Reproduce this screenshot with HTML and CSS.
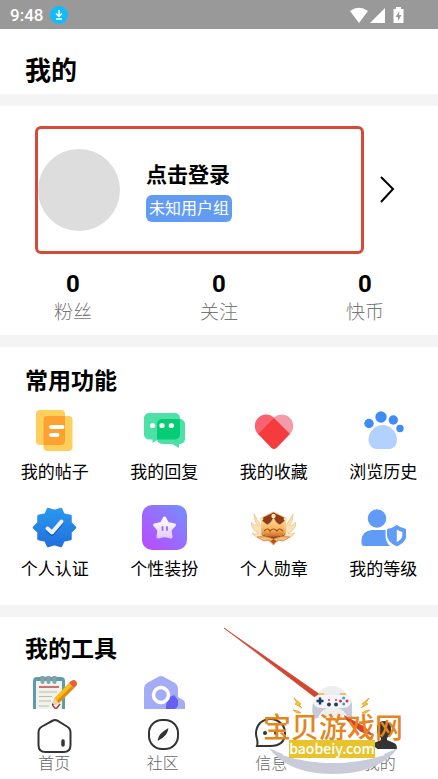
FILE: index.html
```
<!DOCTYPE html>
<html lang="zh-CN">
<head>
<meta charset="UTF-8" />
<meta name="viewport" content="width=device-width, initial-scale=1" />
<title>我的</title>
<link rel="stylesheet" href="styles.css">
</head>
<body>

<!-- STATUS BAR -->
<div class="status-bar">
  <span class="time">9:48</span>
  <svg class="download" width="18" height="18" viewBox="0 0 18 18" aria-hidden="true">
    <circle cx="9" cy="9" r="9" fill="#0fbcff"/>
    <path d="M9 4v6M6 7.500l3 3 3-3M6 13h6" fill="none" stroke="#fff" stroke-width="1.500"/>
  </svg>
  <svg class="signals" width="56" height="18" viewBox="0 0 56 18" fill="#fff" aria-hidden="true">
    <path d="M1 5Q10-1.500 19 5l-9 12z"/>
    <path d="M36 2v15H21z"/>
    <path d="M47 1h5v2h2.500v14h-10V3H47z"/>
    <path d="M50.500 5l-4 6h2.500v4l3.500-6H50z" fill="#999"/>
  </svg>
</div>

<header><h1>我的</h1></header>

<main>
  <!-- PROFILE -->
  <section class="profile">
    <div class="profile-row">
      <a class="login" href="#login">
        <span class="avatar"></span>
        <span class="user">
          <strong>点击登录</strong>
          <span class="group">未知用户组</span>
        </span>
      </a>
      <button class="more" aria-label="更多">
        <svg width="24" height="30" viewBox="0 0 24 30"><path d="M5 2l12 12L5 27" fill="none" stroke="#000" stroke-width="2"/></svg>
      </button>
    </div>
    <div class="stats">
      <a href="#fans"><b>0</b><span>粉丝</span></a>
      <a href="#follow"><b>0</b><span>关注</span></a>
      <a href="#coin"><b>0</b><span>快币</span></a>
    </div>
  </section>

  <!-- COMMON FUNCTIONS -->
  <section class="card">
    <h2>常用功能</h2>
    <div class="grid">
      <a href="#posts">
        <svg viewBox="0 0 45 45">
          <rect x="4" y="2" width="29" height="35" rx="4" fill="#ffcf5c"/>
          <rect x="11.500" y="8" width="29" height="35" rx="4" fill="#ffcf5c"/>
          <path d="M15.500 8H33v25a4 4 0 0 1-4 4H11.500V12a4 4 0 0 1 4-4z" fill="#ffa033"/>
          <path d="M19 19h11.500M19 27h6.500" stroke="#fff" stroke-width="3.800" stroke-linecap="round"/>
        </svg>
        <span>我的帖子</span>
      </a>
      <a href="#replies">
        <svg viewBox="0 0 45 45">
          <path d="M7 5h26a5 5 0 0 1 5 5v16a5 5 0 0 1-5 5.500H16L10.500 35v-3.500H7a5 5 0 0 1-5-5.500V10a5 5 0 0 1 5-5z" fill="#4de1a8"/>
          <path d="M20 11h18a5 5 0 0 1 5 5v15a5 5 0 0 1-5 5h-1v4l-7-4H20a5 5 0 0 1-5-5V16a5 5 0 0 1 5-5z" fill="#4de1a8"/>
          <path d="M20 11h18v15a5 5 0 0 1-5 5.500H15V16a5 5 0 0 1 5-5z" fill="#06cc76"/>
          <g fill="#fff"><circle cx="10.700" cy="17.500" r="2.600"/><circle cx="20" cy="17.500" r="2.600"/><circle cx="29.300" cy="17.500" r="2.600"/></g>
        </svg>
        <span>我的回复</span>
      </a>
      <a href="#favorites">
        <svg viewBox="0 0 45 45">
          <path d="M7 26a11.500 11.500 0 0 1 16-16.500l2 6L12 29z" fill="#f8636d"/>
          <path d="M23 9.500A11.500 11.500 0 0 1 39 26l-5 1-13-13z" fill="#f59aa8"/>
          <path d="M23 10l16 16-13.500 14q-2.500 2-5 0L7 26z" fill="#f43c3e"/>
        </svg>
        <span>我的收藏</span>
      </a>
      <a href="#history">
        <svg viewBox="0 0 45 45">
          <g fill="#3f8cf8">
            <circle cx="8" cy="15.500" r="4.700"/><circle cx="20" cy="9" r="5.700"/>
            <circle cx="32.300" cy="12" r="4.700"/><circle cx="39" cy="20.500" r="3.700"/>
          </g>
          <path d="M22 17c7 0 14 7 14 14.500 0 6-3.500 9.500-8 9.500H15.500c-4.500 0-8-4-8-9.500C7.500 23 15 17 22 17z" fill="#b2d1fe"/>
        </svg>
        <span>浏览历史</span>
      </a>
      <a href="#verify">
        <svg viewBox="0 0 45 45">
          <defs><linearGradient id="blue" x1="0" y1="0" x2="0" y2="1"><stop offset="0" stop-color="#2a98ee"/><stop offset="1" stop-color="#2170df"/></linearGradient></defs>
          <path d="M38.500 18l4.500 4.500-4.500 4.500 0 7-7 1.500-2.500 5.500-6.500-2-6.500 2-2.500-5.500-7-1.500 0-7L2 22.500 6.500 18V11l7-1.500L16 4l6.500 2L29 4l2.500 5.500 7 1.500z" fill="url(#blue)" stroke="url(#blue)" stroke-width="2.500" stroke-linejoin="round"/>
          <path d="M15.500 25l4.500 4 9.500-11" fill="none" stroke="#1858b8" stroke-width="4" stroke-linecap="round" stroke-linejoin="round"/>
          <path d="M15.500 23.500l4.500 4 9.500-11" fill="none" stroke="#edf1fb" stroke-width="4" stroke-linecap="round" stroke-linejoin="round"/>
        </svg>
        <span>个人认证</span>
      </a>
      <a href="#dress">
        <svg viewBox="0 0 45 45">
          <defs>
            <linearGradient id="violet" x1="0" y1="1" x2="1" y2="0"><stop offset="0" stop-color="#bd48ff"/><stop offset="1" stop-color="#7391ff"/></linearGradient>
            <linearGradient id="pale" x1="0" y1="0" x2="0" y2="1"><stop offset="0" stop-color="#fff"/><stop offset="1" stop-color="#e6ccff"/></linearGradient>
          </defs>
          <rect width="45" height="45" rx="10" fill="url(#violet)"/>
          <path d="M22.500 13l3 5.500 7 1.500-4.500 5 1 7-6.500-1.500-6.500 1.500 1-7-4.500-5 7-1.500z" fill="url(#pale)" stroke="url(#pale)" stroke-width="3" stroke-linejoin="round"/>
          <path d="M20.500 22v3M25 22v3" stroke="#a36af5" stroke-width="1.800" stroke-linecap="round"/>
        </svg>
        <span>个性装扮</span>
      </a>
      <a href="#medal">
        <svg viewBox="0 0 45 45">
          <defs><linearGradient id="gold" x1="0" y1="0" x2="0" y2="1"><stop offset="0" stop-color="#ffdc98"/><stop offset=".6" stop-color="#f5b65c"/><stop offset="1" stop-color="#c8681f"/></linearGradient></defs>
          <path d="M3 9q0 8 4 12Q2 20 0 17q0 8 8 11-4 2-7 0 4 6 12 5l-1-8q-4-8-9-16z" fill="#fbe0b8" stroke="#eab67c" stroke-width=".6"/>
          <path d="M42 9q0 8-4 12 5-1 7-4 0 8-8 11 4 2 7 0-4 6-12 5l1-8q4-8 9-16z" fill="#fbe0b8" stroke="#eab67c" stroke-width=".6"/>
          <path d="M22.500 7l12 6v17l-12 9-12-9V13z" fill="#8f3d18" stroke="#eeb575"/>
          <path d="M10 15l6 5q4-1 6.500-7 2.500 6 6.500 7l6-5-2 15q-10.500 4-21 0z" fill="url(#gold)" stroke="#ffe4ae" stroke-width=".6"/>
          <g fill="#ffe2a8"><circle cx="10.500" cy="14" r="1.800"/><circle cx="22.500" cy="11" r="2.200"/><circle cx="34.500" cy="14" r="1.800"/></g>
          <path d="M13 26q4-4 6 0 3.500-4 7 0 2-4 6 0" fill="none" stroke="#a9531a" stroke-width="1.200"/>
          <path d="M12 30q10.500 3 21 0l-1 3q-9.500 2-19 0z" fill="#8f3d18"/>
          <path d="M6 32q8-2 16.500 2Q31 30 39 32l-7 4-5-1-4.500 5-4.500-5-5 1z" fill="#f4be79" stroke="#d98440" stroke-width=".8"/>
          <path d="M19.500 36l3-2 3 2-3 3z" fill="#b94e1a"/>
        </svg>
        <span>个人勋章</span>
      </a>
      <a href="#level">
        <svg viewBox="0 0 45 45" fill="#609cf5">
          <circle cx="16" cy="13.500" r="9.300"/>
          <path d="M11 25h13.500v5q0 7 4.500 11H3q-2.500 0-2.500-3v-3Q1 26 11 25z"/>
          <path d="M35.800 20q4 3 9.700 4v6q0 7-9.700 11.500Q26 37 26 30v-6q5.500-1 9.800-4z"/>
          <path d="M35.800 24.500q2.500 1.800 5.500 2.500v3.500q0 3.500-5.500 6.500z" fill="#fff"/>
        </svg>
        <span>我的等级</span>
      </a>
    </div>
  </section>

  <!-- TOOLS -->
  <section class="card tools">
    <h2>我的工具</h2>
    <div class="grid">
      <a href="#notes" aria-label="记事本">
        <svg viewBox="0 0 45 45">
          <rect x="1" y="1" width="32" height="44" rx="4" fill="#5b9dac"/>
          <rect x="4" y="5" width="26" height="40" fill="#f3f1ea"/>
          <path d="M10.500 1v5M16.500 1v5M22.500 1v5" stroke="#82a5a5" stroke-width="4" stroke-linecap="round"/>
          <path d="M7 11h20" stroke="#b7474c" stroke-width="1.500"/>
          <path d="M7 16h18M7 20.500h13M7 25h12M7 30h10" stroke="#afc0b7" stroke-width="1.200"/>
          <path d="M37 7l5 5-15 15-5-4.500z" fill="#f7bd16"/>
          <path d="M40 10l2 2-15 15-2.500-2z" fill="#dd8917"/>
          <path d="M22 22.500l5 4.500-7 3z" fill="#f4cda4"/>
          <path d="M20 27l2 2-2 1z" fill="#273750"/>
          <path d="M37 7l2-2q3-2 5 0 2 3 0 5l-2 2z" fill="#ed5e35"/>
          <path d="M21 30l3 3 4-5" fill="none" stroke="#a83d3c" stroke-width="1.500"/>
        </svg>
      </a>
      <a href="#camera" aria-label="相机">
        <svg viewBox="0 0 45 45">
          <path d="M16 1q3-2 6 0l11 6q3 2 3 5v16q0 3-3 5l-6 12H10L2 33V12q0-3 3-5z" fill="#a5acf6"/>
          <path d="M24 45V30l7-9q2-3 5 0l5 3q2 1 2 4v17z" fill="#a5acf6"/>
          <path d="M24 34v-4q0-8 8-11l4 5v4q0 5-7 6z" fill="#655ff4"/>
          <circle cx="19" cy="19" r="7.500" fill="none" stroke="#fff" stroke-width="3.500"/>
        </svg>
      </a>
    </div>
  </section>
</main>

<!-- BOTTOM NAV -->
<nav>
  <a href="#home">
    <svg viewBox="0 0 36 36" fill="none" stroke="#333" stroke-width="2">
      <path d="M17 2.500q2-1 4 0l10 6q3.500 2 3.500 6V27q0 7-7 7h-18q-7 0-7-7V14.500q0-4 3.500-6z"/>
      <path d="M27 23v4" stroke-width="3.500" stroke-linecap="round"/>
    </svg>
    <span>首页</span>
  </a>
  <a href="#community">
    <svg viewBox="0 0 36 36" fill="none" stroke="#333" stroke-width="2">
      <rect x="4" y="2" width="29" height="29" rx="13"/>
      <path d="M14 21q1-5 8-9-1 5-8 9z" fill="#333"/>
    </svg>
    <span>社区</span>
  </a>
  <a href="#message">
    <svg viewBox="0 0 36 36" fill="none" stroke="#333" stroke-width="2">
      <path d="M4 28q1-3 0-7Q1 12 7 5 14-1 23 2q9 4 9 13 0 13-15 13z"/>
      <g fill="#333" stroke="none"><circle cx="12" cy="15" r="2"/><circle cx="23" cy="15" r="2"/></g>
    </svg>
    <span>信息</span>
  </a>
  <a href="#mine">
    <svg viewBox="0 0 36 36" fill="#333">
      <path d="M22 3q7 0 7 8 0 6-4 9v2l7 3q3 1 3 6H9q0-5 3-6l7-3v-2q-4-3-4-9 0-8 7-8z"/>
    </svg>
    <span>我的</span>
  </a>
</nav>

<!-- WATERMARK -->
<svg class="watermark" width="215" height="155" viewBox="223 624 215 155" role="img" aria-label="宝贝游戏网 baobeiy.com">
  <circle cx="332" cy="703" r="17" fill="#eee"/>
  <path d="M224 628L319 694l-3 4z" fill="#d34431" stroke="#d34431" stroke-width=".7"/>
  <path d="M269 748q30 15 64 15t65-15q-20 26-65 26t-64-26z" fill="#c9ccd8"/>
  <path d="M282 755q24 8 51 8t52-8l-10-8h-82z" fill="#fff"/>
  <path d="M344 715l21 12 9 9-13-4-16-13z" fill="#d9402d"/>
  <path d="M318 695q5-3 10 0h8q5-3 10 0 5 2 6 9v14h-4q-4-9-10-10h-11q-6 2-9 10l-4 1q-3-8-1-16 1-7 5-8z" fill="#c6c9d8"/>
  <path d="M318 695q5-2 10 0h8q5-2 10 0 5 2 5 7-1 5-7 6h-24q-6-1-7-6 0-5 5-7z" fill="#f4f4fa"/>
  <path d="M318 694h6M340 694h6" stroke="#e3b949" stroke-width="1.500"/>
  <path d="M320 697.500v7M316.500 701h7" stroke="#193e57" stroke-width="2.500"/>
  <g fill="#24414f"><circle cx="329" cy="704.500" r="2"/><circle cx="336" cy="704.500" r="2"/></g>
  <g fill="#d83052"><circle cx="329" cy="700" r="1"/><circle cx="336" cy="700" r="1"/><circle cx="340.500" cy="701" r="1.500"/><circle cx="347" cy="701" r="1.500"/></g>
  <g fill="#2aa9c4"><circle cx="343.700" cy="698" r="1.500"/><circle cx="343.700" cy="704" r="1.500"/></g>
  <path d="M294 698l7 6-2 1 3 3-7-4 2-1zM293 710l5 1 3 2-4 0zM369 698l-7 6 2 1-3 3 7-4-2-1zM370 710l-5 1-3 2 4 0z" fill="#f8c526" stroke="#e99a20" stroke-width=".7"/>
  <text class="mark-name" x="263" y="738">宝贝游戏网</text>
  <rect x="289" y="740" width="86" height="18" fill="#e8c42c"/>
  <text class="mark-url" x="332" y="754" text-anchor="middle">baobeiy.com</text>
</svg>

</body>
</html>
```
FILE: styles.css
```
* {
  box-sizing: border-box;
}
body {
  margin: 0;
  height: 100vh;
  display: flex;
  flex-direction: column;
  position: relative;
  overflow: hidden;
  background: #fff;
  color: #000;
  font-family: Roboto, "Noto Sans CJK SC", sans-serif;
}
a {
  color: inherit;
  text-decoration: none;
}
svg {
  display: block;
  flex: none;
}

/* Status bar */
.status-bar {
  flex: none;
  display: flex;
  align-items: center;
  height: 29px;
  padding: 0 33px 0 10px;
  background: #999;
  color: #fff;
}
.time {
  font-size: 17px;
  font-weight: 500;
  line-height: 28px;
}
.download {
  margin-left: 7px;
}
.signals {
  margin-left: auto;
}

header {
  flex: none;
  padding: 23px 25px 4px;
}
h1 {
  margin: 0;
  font-size: 26px;
  font-weight: 700;
  line-height: 38px;
}

main {
  flex: 1;
  min-height: 0;
  overflow: hidden;
}
section {
  border-top: 12px solid #f4f4f4;
}

/* Profile */
.profile {
  padding: 20px 0 7px;
}
.profile-row {
  display: flex;
  align-items: center;
  padding: 0 38px 0 35px;
}
.login {
  flex: 1;
  display: flex;
  align-items: center;
  gap: 26px;
  height: 128px;
  border: 3px solid #d64a38;
  border-radius: 6px;
}
.avatar {
  width: 82px;
  height: 82px;
  border-radius: 50%;
  background: #ddd;
}
.user {
  display: flex;
  flex-direction: column;
  align-items: flex-start;
  gap: 4px;
}
.user strong {
  font-size: 21px;
  font-weight: 700;
  line-height: 32px;
}
.group {
  padding: 0 3px;
  border-radius: 6px;
  background: #629bf4;
  color: #fff;
  font-size: 16px;
  line-height: 27px;
}
.more {
  margin-left: 12px;
  padding: 0;
  border: none;
  background: none;
}
.stats {
  display: grid;
  grid-template-columns: repeat(3, 1fr);
  margin-top: 16px;
}
.stats a {
  display: flex;
  flex-direction: column;
  align-items: center;
}
.stats b {
  font-size: 24px;
  font-weight: 700;
  line-height: 28px;
}
.stats span {
  color: #777;
  font-size: 19px;
  font-weight: 300;
  line-height: 30px;
}

/* Function cards */
.card {
  padding: 18px 0 24px;
}
.card h2 {
  margin: 0 25px 9px;
  font-size: 23px;
  font-weight: 700;
  line-height: 34px;
}
.tools {
  padding-top: 16px;
}
.grid {
  display: grid;
  grid-template-columns: repeat(4, 1fr);
  row-gap: 21px;
}
.grid a {
  display: flex;
  flex-direction: column;
  align-items: center;
  gap: 7px;
  font-size: 17px;
  line-height: 24px;
}
.grid svg {
  width: 45px;
  height: 45px;
}

/* Bottom nav */
nav {
  flex: none;
  display: grid;
  grid-template-columns: repeat(4, 1fr);
  padding: 9px 4px 5px 0;
  background: #fff;
}
nav a {
  display: flex;
  flex-direction: column;
  align-items: center;
  color: #666;
  font-size: 16px;
  font-weight: 300;
  line-height: 20px;
}
nav svg {
  width: 36px;
  height: 36px;
}

/* Watermark over the nav */
.watermark {
  position: absolute;
  right: 0;
  bottom: 0;
  pointer-events: none;
}
.mark-name {
  fill: #e5851c;
  font-family: "Noto Sans CJK SC", sans-serif;
  font-size: 28px;
  font-weight: 500;
}
.mark-url {
  fill: #fff;
  font-family: "Noto Sans CJK SC", sans-serif;
  font-size: 14px;
  font-weight: 500;
}
```
